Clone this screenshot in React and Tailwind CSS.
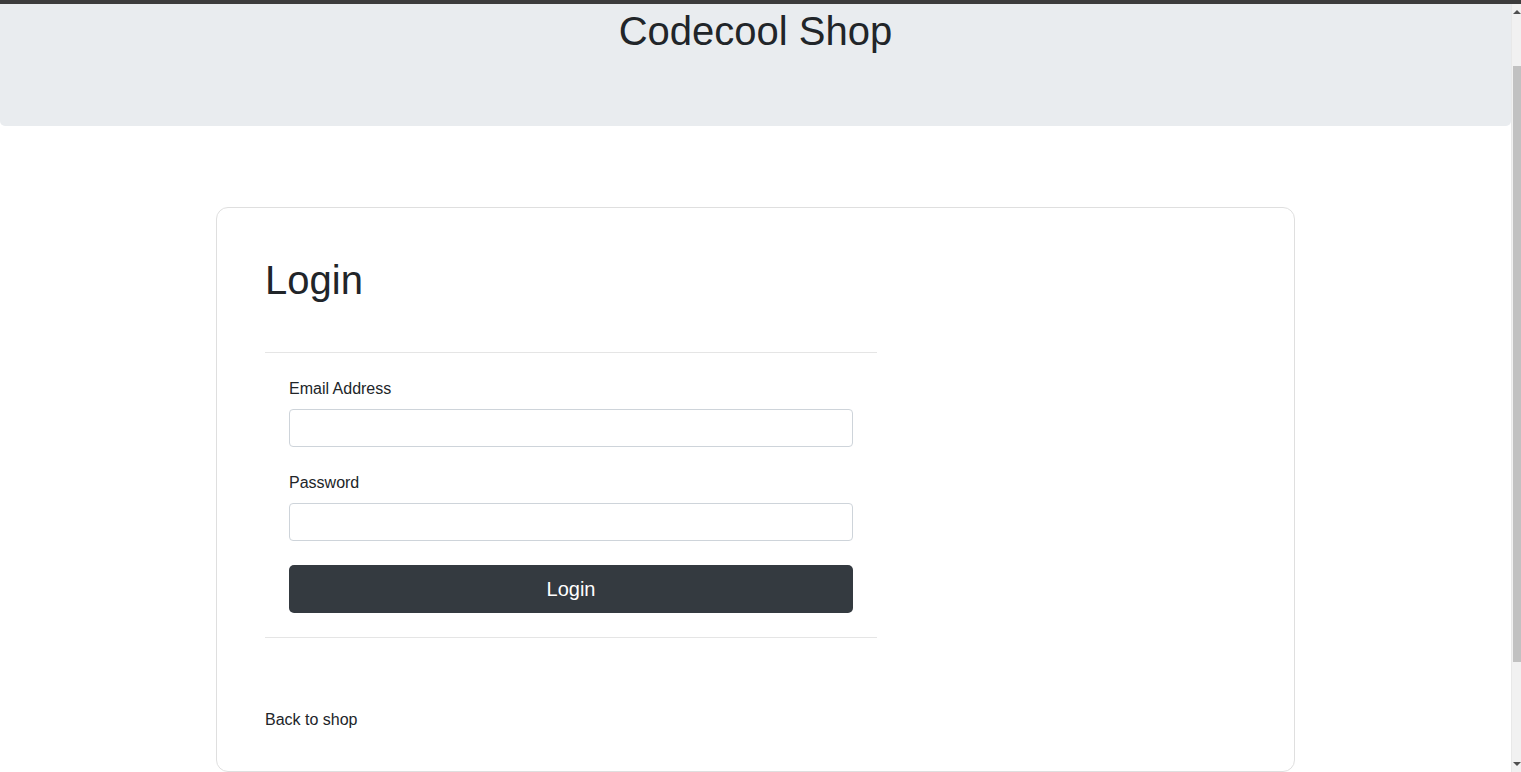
const App = () => {
  return (
    <div className="h-[772px] overflow-hidden flex flex-col bg-white text-[#212529] font-['Liberation_Sans',Arial,sans-serif]">
      {/* top strip */}
      <div className="h-[4px] bg-[#3c3c3c] shrink-0" />

      <div className="flex flex-1 min-h-0">
        {/* page */}
        <div className="flex-1 min-w-0">
          {/* Header */}
          <div className="h-[122px] bg-[#e9ecef] rounded-b-[5px]">
            <h1 className="text-center text-[40px] leading-[48px] pt-[3px]">Codecool Shop</h1>
          </div>

          {/* Login card */}
          <div className="mt-[81px] mx-auto w-[1079px] h-[565px] border border-[#dfdfdf] rounded-[12px] p-[48px]">
            <h1 className="text-[40px] leading-[48px]">Login</h1>

            <div className="w-[612px] mt-[48px] border-t border-b border-[#e5e5e5]">
              <form className="px-[24px] pt-[24px] pb-[24px]" onSubmit={(e) => e.preventDefault()}>
                <label className="block text-[16px] leading-[24px] mb-[8px]">Email Address</label>
                <input
                  type="email"
                  className="block w-full h-[38px] border border-[#ced4da] rounded-[4px] px-3"
                />

                <label className="block text-[16px] leading-[24px] mt-[24px] mb-[8px]">Password</label>
                <input
                  type="password"
                  className="block w-full h-[38px] border border-[#ced4da] rounded-[4px] px-3"
                />

                <button className="mt-[24px] w-full h-[48px] bg-[#343a40] text-white text-[20px] rounded-[5px]">
                  Login
                </button>
              </form>
            </div>

            <a href="#" className="block mt-[70px] text-[16px] leading-[24px] text-[#212529]">
              Back to shop
            </a>
          </div>
        </div>

        {/* scrollbar */}
        <div className="w-[10px] shrink-0 bg-[#f1f1f1] border-l border-[#e8e8e8] flex flex-col items-center">
          <div className="h-[16px] flex items-center justify-center">
            <div className="w-0 h-0 border-l-[4px] border-r-[4px] border-b-[4px] border-l-transparent border-r-transparent border-b-[#505050]" />
          </div>
          <div className="mt-[46px] w-[8px] h-[596px] bg-[#c1c1c1]" />
          <div className="flex-1" />
          <div className="h-[16px] flex items-center justify-center">
            <div className="w-0 h-0 border-l-[4px] border-r-[4px] border-t-[4px] border-l-transparent border-r-transparent border-t-[#505050]" />
          </div>
        </div>
      </div>
    </div>
  );
};

export default App;
